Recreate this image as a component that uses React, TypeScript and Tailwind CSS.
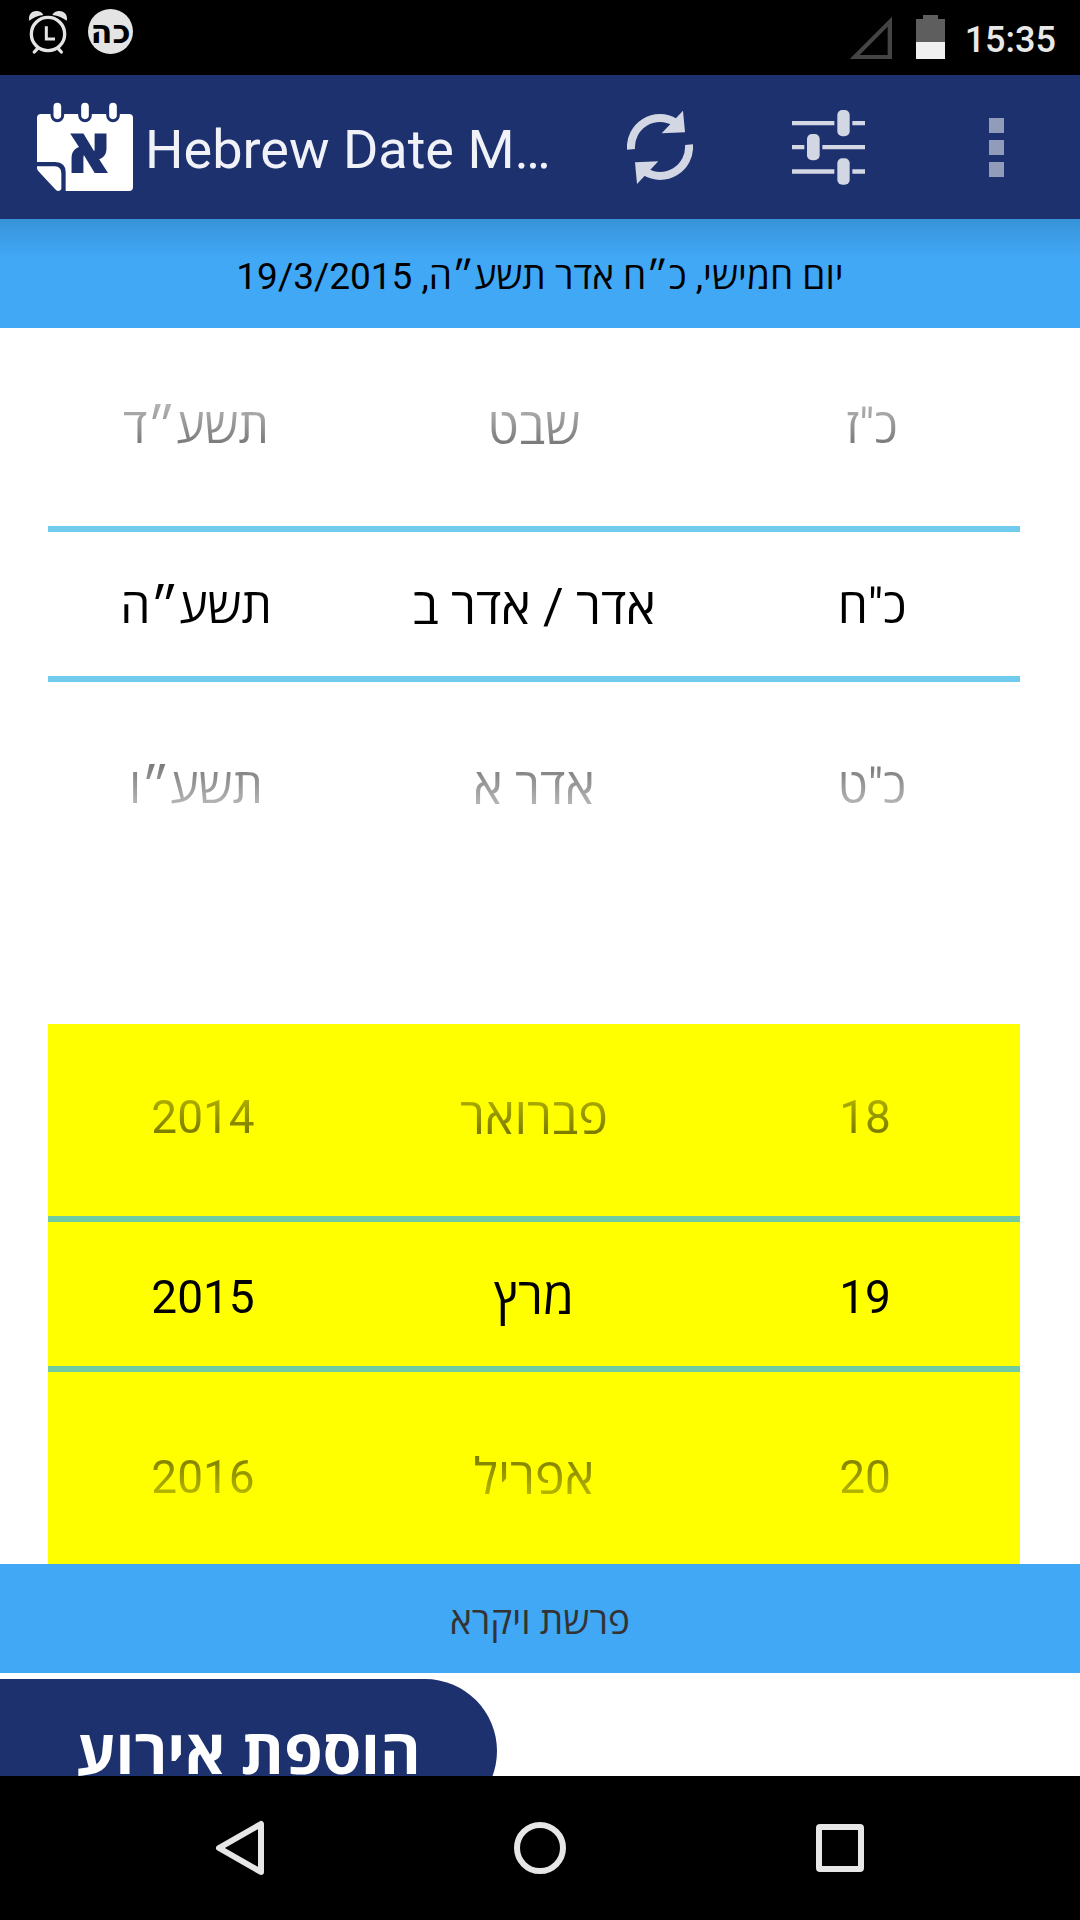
import { useState } from "react";

type Column = {
  label: string;
  text: string;
  values: string[];
};

const hebrewColumns: Column[] = [
  { label: "שנה עברית", text: "text-[48px]", values: ["תשע״ד", "תשע״ה", "תשע״ו"] },
  { label: "חודש עברי", text: "text-[50px]", values: ["שבט", "אדר / אדר ב", "אדר א"] },
  { label: "יום עברי", text: "text-[48px]", values: ['כ"ז', 'כ"ח', 'כ"ט'] },
];

const gregorianColumns: Column[] = [
  { label: "שנה לועזית", text: "text-[46px]", values: ["2014", "2015", "2016"] },
  { label: "חודש לועזי", text: "text-[50px]", values: ["פברואר", "מרץ", "אפריל"] },
  { label: "יום לועזי", text: "text-[46px]", values: ["18", "19", "20"] },
];

export default function App() {
  return (
    <div className="flex h-screen flex-col overflow-hidden bg-white font-['Roboto','Open_Sans',sans-serif] text-black">
      <StatusBar />
      <ActionBar />

      <main className="flex-1 overflow-hidden">
        <div
          dir="rtl"
          className="flex h-[109px] items-center justify-center bg-linear-to-b from-[#3793d8] to-[#41a8f6] to-35% pt-1.5 text-[37px] leading-[48px]"
        >
          יום חמישי, כ״ח אדר תשע״ה, 19/3/2015
        </div>

        <div className="mt-1.5 mr-[60px] ml-12">
          <DatePicker columns={hebrewColumns} grid="grid-cols-[74fr_95fr_74fr]" />
        </div>
        <div className="mt-[150px] mr-[60px] ml-12 bg-[#ffff00]">
          <DatePicker columns={gregorianColumns} grid="grid-cols-[155fr_176fr_155fr]" />
        </div>

        <div
          dir="rtl"
          className="flex h-[109px] items-center justify-center bg-[#41a8f6] pt-1.5 text-[37px] leading-[48px] text-[#333333]"
        >
          פרשת ויקרא
        </div>

        <button
          dir="rtl"
          className="mt-1.5 h-36 w-[497px] rounded-r-full bg-[#1e316f] pt-1 text-[62px] leading-[72px] font-bold text-white"
        >
          הוספת אירוע
        </button>
      </main>

      <NavBar />
    </div>
  );
}

function DatePicker({ columns, grid }: { columns: Column[]; grid: string }) {
  return (
    <div className="relative">
      <div
        className={`grid ${grid} mask-[linear-gradient(transparent_20px,black_192px,black_348px,transparent_520px)]`}
      >
        {columns.map((column) => (
          <Wheel key={column.label} column={column} />
        ))}
      </div>
      {/* selection dividers */}
      <div className="pointer-events-none absolute inset-x-0 top-48 h-[156px] border-y-6 border-[#33b5e5]/70" />
    </div>
  );
}

function Wheel({ column }: { column: Column }) {
  const [index, setIndex] = useState(1);
  const { label, text, values } = column;

  return (
    <div role="group" aria-label={label} dir="rtl" className={`flex flex-col leading-[60px] ${text}`}>
      <button className="h-[180px] pt-1.5" onClick={() => setIndex(Math.max(index - 1, 0))}>
        {values[index - 1]}
      </button>
      <div className="flex h-[180px] items-center justify-center pt-1.5">{values[index]}</div>
      <button className="h-[180px] pt-1.5" onClick={() => setIndex(Math.min(index + 1, values.length - 1))}>
        {values[index + 1]}
      </button>
    </div>
  );
}

function StatusBar() {
  return (
    <div className="flex h-[75px] items-start justify-between bg-black pr-6 pl-7">
      <div className="flex gap-[21px] pt-[9px]">
        <svg width="39" height="45" viewBox="84 27 117 135" fill="none" stroke="#e4e4e4">
          <circle cx="144" cy="102" r="50" strokeWidth="10" />
          <path d="M139 79V117H165" strokeWidth="9" />
          <path d="M113 145L103 156M174 145L184 156" strokeWidth="10" strokeLinecap="round" />
          <path d="M88 62C83 43 97 31 112 33C121 34 127 39 130 45C112 47 99 54 88 62Z" fill="#e4e4e4" stroke="none" />
          <path d="M200 62C205 43 190 31 175 33C166 34 160 39 157 45C175 47 188 54 200 62Z" fill="#e4e4e4" stroke="none" />
        </svg>
        <div className="flex size-[45px] items-center justify-center rounded-full bg-[#e4e4e4] font-['DejaVu_Sans',sans-serif] text-[32px] leading-none font-bold text-black">
          כה
        </div>
      </div>
      <div className="flex items-start pt-[15px]">
        <svg width="43" height="44" viewBox="204 45 129 132" fill="#444444" className="mr-6">
          <path fillRule="evenodd" d="M206 177L333 50V177ZM236 165H320V80Z" />
        </svg>
        <svg width="29" height="44" viewBox="0 0 29 44" className="mr-5">
          <path d="M7 0H22V4H29V27H0V4H7Z" fill="#5e5e5e" />
          <path d="M0 27H29V44H0Z" fill="#f0f0f0" />
        </svg>
        <span className="text-[36px] leading-[50px] font-medium text-[#e8e8e8]">15:35</span>
      </div>
    </div>
  );
}

function ActionBar() {
  return (
    <header className="flex h-36 items-center bg-[#1e316f] pl-9">
      <CalendarLogo />
      <h1 className="ml-[11px] flex-1 truncate pt-1.5 text-[54px] leading-[72px] text-[#f0f2f8]">Hebrew Date M…</h1>
      <button aria-label="Sync" className="flex h-full w-[168px] items-center justify-center">
        <svg width="66" height="74" viewBox="204 119 198 222" fill="none">
          <g stroke="#d3d7e4" strokeWidth="24">
            <path d="M216 237A87 87 0 0 1 348 156" />
            <path d="M390 223A87 87 0 0 1 258 304" />
          </g>
          <path d="M372 121L378 186L308 189Z" fill="#d3d7e4" />
          <path d="M234 341L228 276L298 273Z" fill="#d3d7e4" />
        </svg>
      </button>
      <button aria-label="Settings" className="flex h-full w-[168px] items-center justify-center">
        <svg width="73" height="75" viewBox="695 119 219 225" fill="#d3d7e4">
          <path d="M695 152H822V165H695ZM876 152H914V165H876Z" />
          <path d="M695 224H732V237H695ZM786 224H914V237H786Z" />
          <path d="M695 297H822V310H695ZM876 297H914V310H876Z" />
          <rect x="831" y="119" width="37" height="79" rx="15" />
          <rect x="740" y="191" width="38" height="79" rx="15" />
          <rect x="831" y="264" width="37" height="79" rx="15" />
        </svg>
      </button>
      <button aria-label="More options" className="flex h-full w-[168px] flex-col items-center justify-center gap-[7px]">
        <span className="size-[15px] bg-[#919bba]" />
        <span className="size-[15px] bg-[#919bba]" />
        <span className="size-[15px] bg-[#919bba]" />
      </button>
    </header>
  );
}

function CalendarLogo() {
  return (
    <svg width="98" height="90" viewBox="108 306 294 270">
      <rect x="111" y="342" width="288" height="231" rx="12" fill="#ffffff" />
      {/* rings */}
      <g fill="#ffffff" stroke="#1e316f" strokeWidth="9">
        <rect x="156" y="304" width="32" height="58" rx="16" />
        <rect x="239" y="304" width="32" height="58" rx="16" />
        <rect x="323" y="304" width="32" height="58" rx="16" />
      </g>
      {/* folded corner */}
      <path d="M106 486H166Q197 488 197 516V578H106Z" fill="#1e316f" />
      <path d="M111 499H164Q184 500 184 520V567Q182 573 174 573Q170 573 165 567L114 512Q110 507 111 499Z" fill="#ffffff" />
      <text
        x="267"
        y="520"
        textAnchor="middle"
        fill="#1e316f"
        className="font-['Open_Sans',sans-serif] text-[188px] font-extrabold"
      >
        א
      </text>
    </svg>
  );
}

function NavBar() {
  return (
    <nav className="grid h-36 grid-cols-3 bg-black px-[90px]">
      <button aria-label="Back" className="flex items-center justify-center">
        <svg width="50" height="56" viewBox="0 0 50 56" fill="none" stroke="#e6e6e6" strokeWidth="6" strokeLinejoin="round">
          <path d="M4 28L46 4V52Z" />
        </svg>
      </button>
      <button aria-label="Home" className="flex items-center justify-center">
        <span className="size-[52px] rounded-full border-6 border-[#e6e6e6]" />
      </button>
      <button aria-label="Recent apps" className="flex items-center justify-center">
        <span className="size-12 rounded border-6 border-[#e6e6e6]" />
      </button>
    </nav>
  );
}
